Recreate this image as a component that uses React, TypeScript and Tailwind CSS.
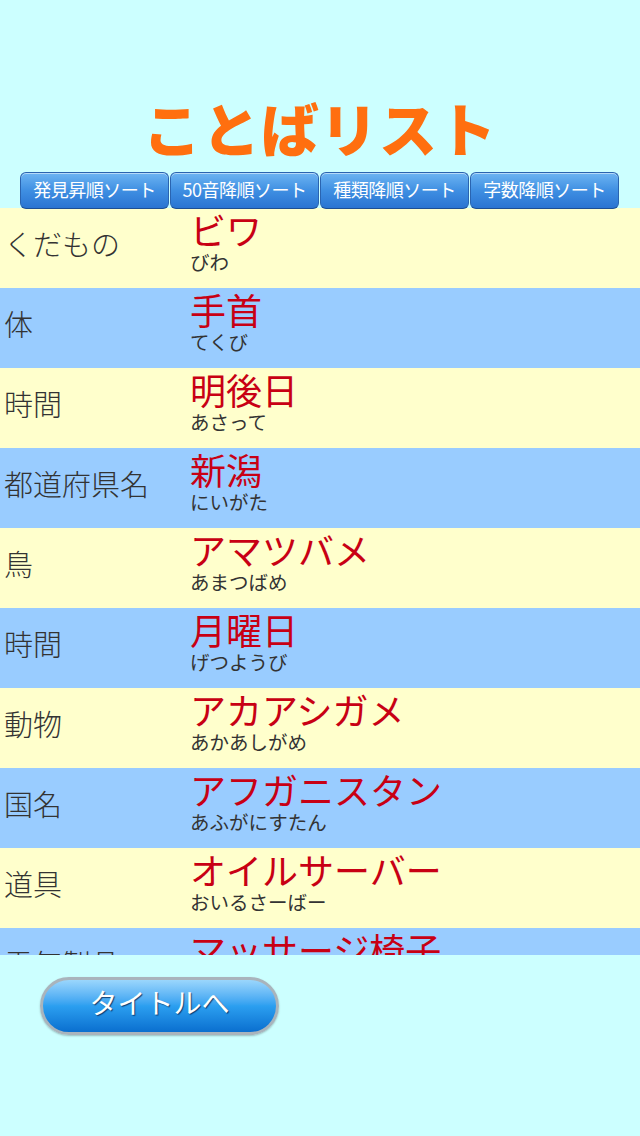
const FONT = { fontFamily: '"Noto Sans CJK JP", "Noto Sans", sans-serif' }

type Word = { kind: string; name: string; yomi: string }

const WORDS: Word[] = [
  { kind: 'くだもの', name: 'ビワ', yomi: 'びわ' },
  { kind: '体', name: '手首', yomi: 'てくび' },
  { kind: '時間', name: '明後日', yomi: 'あさって' },
  { kind: '都道府県名', name: '新潟', yomi: 'にいがた' },
  { kind: '鳥', name: 'アマツバメ', yomi: 'あまつばめ' },
  { kind: '時間', name: '月曜日', yomi: 'げつようび' },
  { kind: '動物', name: 'アカアシガメ', yomi: 'あかあしがめ' },
  { kind: '国名', name: 'アフガニスタン', yomi: 'あふがにすたん' },
  { kind: '道具', name: 'オイルサーバー', yomi: 'おいるさーばー' },
  { kind: '電気製品', name: 'マッサージ椅子', yomi: 'まっさーじいす' },
]

const SORTS = ['発見昇順ソート', '50音降順ソート', '種類降順ソート', '字数降順ソート']

export default function App() {
  return (
    <div className="w-[640px] h-[1136px] bg-[#ccffff] flex flex-col" style={FONT}>
      {/* Title */}
      <div className="h-[172px] flex items-end justify-center pb-[10px]">
        <h1 className="text-[58px] leading-[70px] font-black text-[#ff6f0f] tracking-[1px]">ことばリスト</h1>
      </div>

      {/* Sort buttons */}
      <div className="flex px-[20px] gap-[1px] h-[37px] relative z-10">
        {SORTS.map(s => (
          <button
            key={s}
            className="w-[149px] h-[37px] pb-[4px] rounded-[6px] border border-[#2a64b0] border-b-[#1d4f94] bg-gradient-to-b from-[#6cb4f2] via-[#3f8fe2] to-[#2a74d2] text-white text-[18px] leading-none tracking-[-0.5px] shadow-[inset_0_1px_0_rgba(255,255,255,0.5)]">
            {s}
          </button>
        ))}
      </div>

      {/* List */}
      <div className="h-[747px] overflow-hidden -mt-[1px]">
        {WORDS.map((w, i) => (
          <div
            key={i}
            className={`h-[80px] flex ${i % 2 === 0 ? 'bg-[#ffffcc]' : 'bg-[#99ccff]'}`}>
            <div className="w-[190px] pl-[4px] pb-[8px] flex items-center text-[29px] font-light text-[#333333] whitespace-nowrap">
              {w.kind}
            </div>
            <div className="flex flex-col whitespace-nowrap">
              <span className="text-[36px] leading-[42px] text-[#c80014]">{w.name}</span>
              <span className="text-[19.5px] leading-[24px] text-[#333333]">{w.yomi}</span>
            </div>
          </div>
        ))}
      </div>

      {/* Back button */}
      <div className="pt-[22px] pl-[40px]">
        <button
          className="w-[239px] h-[58px] pb-[8px] rounded-full border-[3px] border-[#a9b4bc] bg-gradient-to-b from-[#9ad6fc] via-[#2b9ff0] to-[#0a6fcf] text-white text-[28px] leading-none shadow-[0_1px_2px_rgba(0,0,0,0.25)] [text-shadow:1px_1px_1px_rgba(0,40,90,0.8)]">
          タイトルへ
        </button>
      </div>
    </div>
  )
}
